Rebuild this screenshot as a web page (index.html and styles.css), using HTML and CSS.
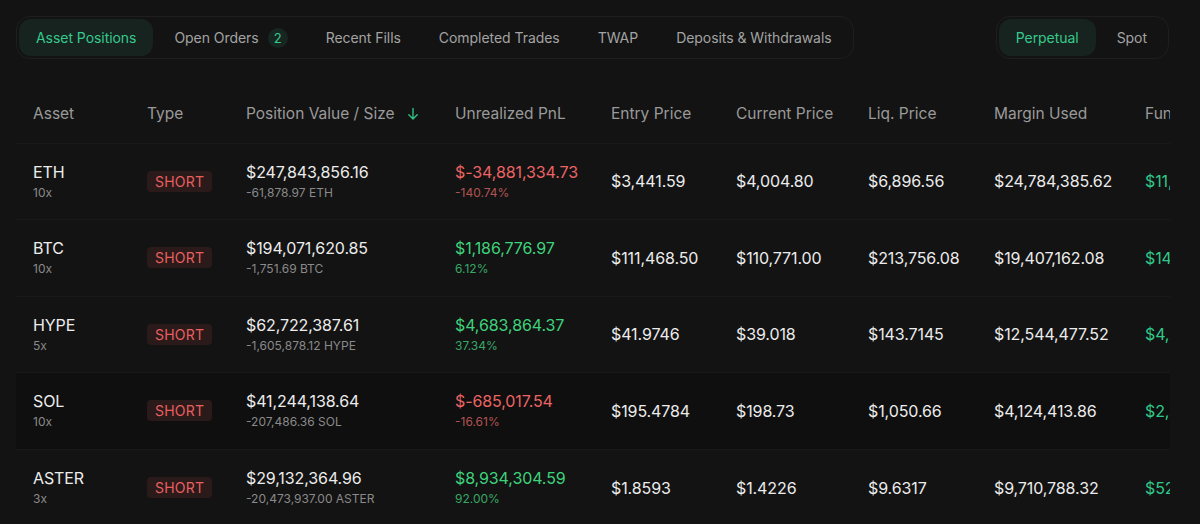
FILE: index.html
```html
<!DOCTYPE html>
<html>
<head>
<meta charset="utf-8">
<link rel="stylesheet" href="styles.css">
</head>
<body>
<div class="page">
  <div class="topbar">
    <div class="tabs">
      <div class="tab active">Asset Positions</div>
      <div class="tab">Open Orders <span class="count">2</span></div>
      <div class="tab">Recent Fills</div>
      <div class="tab">Completed Trades</div>
      <div class="tab">TWAP</div>
      <div class="tab">Deposits &amp; Withdrawals</div>
    </div>
    <div class="tabs toggle">
      <div class="tab active">Perpetual</div>
      <div class="tab">Spot</div>
    </div>
  </div>
  <div class="tablewrap">
    <table class="positions">
      <colgroup>
        <col class="c-asset"><col class="c-type"><col class="c-value"><col class="c-pnl"><col class="c-entry"><col class="c-current"><col class="c-liq"><col class="c-margin"><col class="c-fund">
      </colgroup>
      <thead>
        <tr>
          <th>Asset</th>
          <th>Type</th>
          <th>Position Value / Size <svg class="sort" width="12" height="14" viewBox="0 0 12 14"><path d="M6 1.5v10.5M1.8 7.8L6 12l4.2-4.2" fill="none" stroke="currentColor" stroke-width="1.4" stroke-linecap="round" stroke-linejoin="round"/></svg></th>
          <th>Unrealized PnL</th>
          <th>Entry Price</th>
          <th>Current Price</th>
          <th>Liq. Price</th>
          <th>Margin Used</th>
          <th>Funding</th>
        </tr>
      </thead>
      <tbody>
        <tr>
          <td><div class="main">ETH</div><div class="sub">10x</div></td>
          <td><span class="badge">SHORT</span></td>
          <td><div class="main">$247,843,856.16</div><div class="sub">-61,878.97 ETH</div></td>
          <td><div class="main neg">$-34,881,334.73</div><div class="sub neg-sub">-140.74%</div></td>
          <td><div class="main">$3,441.59</div></td>
          <td><div class="main">$4,004.80</div></td>
          <td><div class="main">$6,896.56</div></td>
          <td><div class="main">$24,784,385.62</div></td>
          <td><div class="main fund">$11,208,114.63</div></td>
        </tr>
        <tr>
          <td><div class="main">BTC</div><div class="sub">10x</div></td>
          <td><span class="badge">SHORT</span></td>
          <td><div class="main">$194,071,620.85</div><div class="sub">-1,751.69 BTC</div></td>
          <td><div class="main pos">$1,186,776.97</div><div class="sub pos-sub">6.12%</div></td>
          <td><div class="main">$111,468.50</div></td>
          <td><div class="main">$110,771.00</div></td>
          <td><div class="main">$213,756.08</div></td>
          <td><div class="main">$19,407,162.08</div></td>
          <td><div class="main fund">$14,115,402.11</div></td>
        </tr>
        <tr>
          <td><div class="main">HYPE</div><div class="sub">5x</div></td>
          <td><span class="badge">SHORT</span></td>
          <td><div class="main">$62,722,387.61</div><div class="sub">-1,605,878.12 HYPE</div></td>
          <td><div class="main pos">$4,683,864.37</div><div class="sub pos-sub">37.34%</div></td>
          <td><div class="main">$41.9746</div></td>
          <td><div class="main">$39.018</div></td>
          <td><div class="main">$143.7145</div></td>
          <td><div class="main">$12,544,477.52</div></td>
          <td><div class="main fund">$4,502,118.20</div></td>
        </tr>
        <tr class="hover">
          <td><div class="main">SOL</div><div class="sub">10x</div></td>
          <td><span class="badge">SHORT</span></td>
          <td><div class="main">$41,244,138.64</div><div class="sub">-207,486.36 SOL</div></td>
          <td><div class="main neg">$-685,017.54</div><div class="sub neg-sub">-16.61%</div></td>
          <td><div class="main">$195.4784</div></td>
          <td><div class="main">$198.73</div></td>
          <td><div class="main">$1,050.66</div></td>
          <td><div class="main">$4,124,413.86</div></td>
          <td><div class="main fund">$2,310,774.05</div></td>
        </tr>
        <tr>
          <td><div class="main">ASTER</div><div class="sub">3x</div></td>
          <td><span class="badge">SHORT</span></td>
          <td><div class="main">$29,132,364.96</div><div class="sub">-20,473,937.00 ASTER</div></td>
          <td><div class="main pos">$8,934,304.59</div><div class="sub pos-sub">92.00%</div></td>
          <td><div class="main">$1.8593</div></td>
          <td><div class="main">$1.4226</div></td>
          <td><div class="main">$9.6317</div></td>
          <td><div class="main">$9,710,788.32</div></td>
          <td><div class="main fund">$521,904.77</div></td>
        </tr>
      </tbody>
    </table>
  </div>
</div>
</body>
</html>
```
FILE: styles.css
```css
* { box-sizing: border-box; }
html, body { margin: 0; padding: 0; background: #131313; }
body {
  font-family: Inter, "Noto Sans", sans-serif;
  color: #e6e6e6;
  width: 1200px;
  height: 524px;
  overflow: hidden;
}
.page { padding: 16px 31px 0 16px; }
.topbar {
  display: flex;
  justify-content: space-between;
  align-items: center;
}
.tabs {
  display: flex;
  align-items: center;
  height: 43px;
  padding: 2px;
  border: 1px solid #1e1e1e;
  border-radius: 14px;
}
.tab {
  display: flex;
  align-items: center;
  height: 37px;
  padding: 0 19px;
  border-radius: 12px;
  font-size: 14px;
  color: #a3a3a3;
  white-space: nowrap;
  letter-spacing: -0.05px;
}
.tab.active {
  background: #17231f;
  color: #35c98d;
  padding: 0 17px;
  margin-right: 2px;
}
.count {
  display: inline-flex;
  align-items: center;
  justify-content: center;
  width: 20px;
  height: 20px;
  margin-left: 9px;
  border-radius: 50%;
  background: #182621;
  color: #35c98d;
  font-size: 13px;
}
.toggle .tab { padding: 0 19px 0 21px; }
.toggle .tab.active { padding: 0 17px; margin-right: 0; }

.tablewrap {
  margin-top: 28px;
  width: 1154px;
  overflow: hidden;
}
.positions {
  table-layout: fixed;
  border-collapse: collapse;
  width: 1240px;
}
.c-asset { width: 114px; }
.c-type { width: 99px; }
.c-value { width: 209px; }
.c-pnl { width: 156px; }
.c-entry { width: 125px; }
.c-current { width: 132px; }
.c-liq { width: 126px; }
.c-margin { width: 151px; }
.c-fund { width: 128px; }
th {
  text-align: left;
  font-weight: 400;
  font-size: 15.5px;
  color: #9a9a9a;
  height: 56px;
  padding: 0 0 3px 17px;
  white-space: nowrap;
  vertical-align: middle;
  border-bottom: 1px solid #191919;
}
.sort { color: #2fbf82; margin-left: 8px; vertical-align: -2px; }
td {
  height: 76.5px;
  padding: 0 0 0 17px;
  vertical-align: middle;
  white-space: nowrap;
  border-bottom: 1px solid #191919;
}
tbody tr:last-child td { border-bottom: none; }
tr.hover td { background: #0f0f0f; }
.main {
  font-size: 16px;
  color: #ececec;
  line-height: 20px;
  letter-spacing: -0.1px;
}
.sub {
  font-size: 12px;
  color: #8a8a8a;
  line-height: 16px;
  margin-top: 3px;
}
.neg { color: #ec6464; }
.neg-sub { color: #b25353; }
.pos { color: #3ed27c; }
.pos-sub { color: #37a866; }
.fund { color: #2fc98c; }
.badge {
  display: inline-block;
  padding: 2px 8px;
  border-radius: 4px;
  background: #2a1a1a;
  color: #e85f5f;
  font-size: 14px;
  line-height: 17px;
  letter-spacing: 0.2px;
}
```
